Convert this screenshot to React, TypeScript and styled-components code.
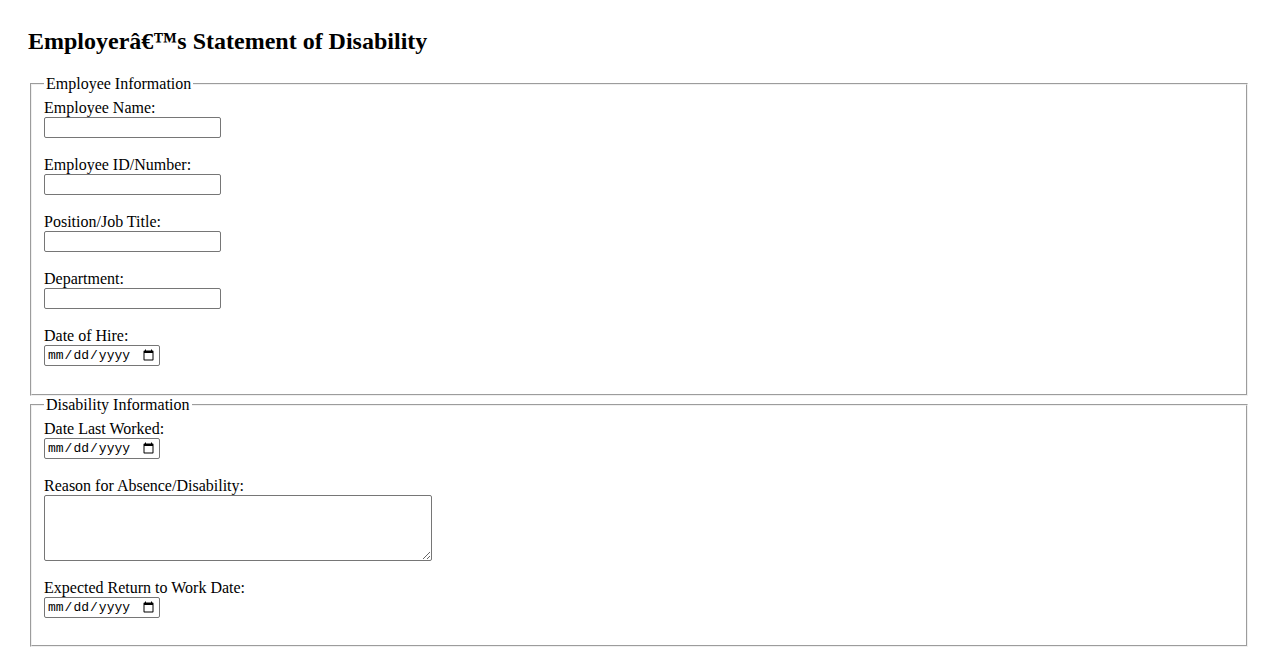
import styled, {createGlobalStyle} from 'styled-components';

const GlobalStyle = createGlobalStyle`
  html, body {
    margin: 0;
    padding: 0;
    background: #fff;
  }
  body {
    padding: 28px;
    font-family: "Liberation Serif", "Times New Roman", serif;
    font-size: 16px;
    color: #000;
  }
`;

const App = (): JSX.Element => {
  return (
    <>
      <GlobalStyle />
      <Page>
        <Title>Employerâ€™s Statement of Disability</Title>
        <form onSubmit={(e) => e.preventDefault()}>
          <Section>
            <Legend>Employee Information</Legend>
            <Field>
              <Label htmlFor="employeeName">Employee Name:</Label>
              <TextInput type="text" id="employeeName" name="employeeName" />
            </Field>
            <Field>
              <Label htmlFor="employeeId">Employee ID/Number:</Label>
              <TextInput type="text" id="employeeId" name="employeeId" />
            </Field>
            <Field>
              <Label htmlFor="jobTitle">Position/Job Title:</Label>
              <TextInput type="text" id="jobTitle" name="jobTitle" />
            </Field>
            <Field>
              <Label htmlFor="department">Department:</Label>
              <TextInput type="text" id="department" name="department" />
            </Field>
            <Field>
              <Label htmlFor="hireDate">Date of Hire:</Label>
              <DateInput type="date" id="hireDate" name="hireDate" />
            </Field>
          </Section>

          <Section>
            <Legend>Disability Information</Legend>
            <Field>
              <Label htmlFor="lastWorked">Date Last Worked:</Label>
              <DateInput type="date" id="lastWorked" name="lastWorked" />
            </Field>
            <Field $gap={18.2}>
              <Label htmlFor="reason">Reason for Absence/Disability:</Label>
              <TextArea id="reason" name="reason" />
            </Field>
            <Field $gap={17.6}>
              <Label htmlFor="returnDate">Expected Return to Work Date:</Label>
              <DateInput type="date" id="returnDate" name="returnDate" />
            </Field>
          </Section>
        </form>
      </Page>
    </>
  );
};

// STYLES

const Page = styled.div`
  width: 100%;
`;

const Title = styled.h2`
  margin: 0 0 19.92px;
  font-size: 24px;
  font-weight: bold;
  line-height: normal;
`;

const Section = styled.fieldset`
  margin: 0 2px;
  padding: 5.6px 12px 10px;
  border: 2px groove #f0f0f0;
  min-width: min-content;
`;

const Legend = styled.legend`
  padding: 0 2px;
  font-size: 16px;
  line-height: normal;
`;

const Field = styled.div<{$gap?: number}>`
  display: flex;
  flex-direction: column;
  align-items: flex-start;
  margin-bottom: ${({$gap}) => $gap ?? 18.1}px;
`;

const Label = styled.label`
  display: block;
  line-height: normal;
`;

const controlBase = `
  box-sizing: border-box;
  margin: 0;
  border: 1px solid #767676;
  border-radius: 2px;
  background: #fff;
  color: #000;
`;

const TextInput = styled.input`
  ${controlBase}
  width: 177px;
  height: 21px;
  padding: 1px 2px;
  font-family: "Liberation Sans", Arial, sans-serif;
  font-size: 13.33px;
`;

const DateInput = styled.input`
  ${controlBase}
  width: 116px;
  height: 21px;
  padding: 1px 2px;
  font-family: "Liberation Mono", "DejaVu Sans Mono", monospace;
  font-size: 13px;
`;

const TextArea = styled.textarea`
  ${controlBase}
  display: block;
  width: 388px;
  height: 66px;
  padding: 2px;
  font-family: "Liberation Mono", monospace;
  font-size: 13.33px;
`;

export default App;
